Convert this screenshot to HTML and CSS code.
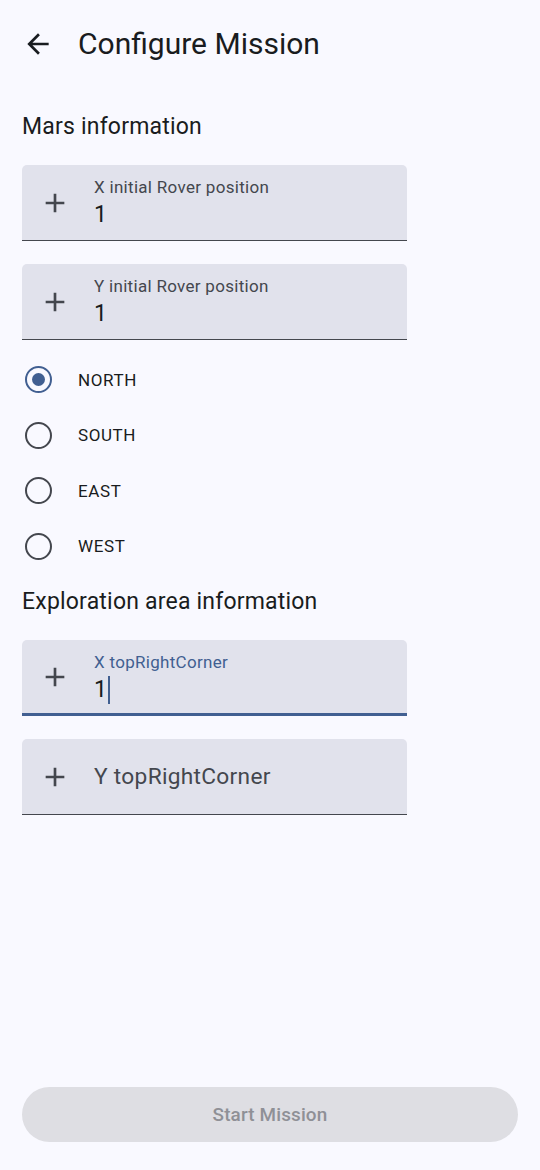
FILE: index.html
```html
<!DOCTYPE html>
<html lang="en">
<head>
<meta charset="utf-8">
<title>Configure Mission</title>
<link rel="stylesheet" href="styles.css">
</head>
<body>
<div class="screen">
  <header class="appbar">
    <span class="nav-icon">
      <svg viewBox="0 0 24 24" width="32" height="32"><path d="M20 11H7.83l5.59-5.59L12 4l-8 8 8 8 1.41-1.41L7.83 13H20v-2z" fill="#191c20"/></svg>
    </span>
    <h1 class="title">Configure Mission</h1>
  </header>

  <main class="content">
    <h2 class="section-title">Mars information</h2>

    <div class="field">
      <span class="lead"><svg viewBox="0 0 24 24" width="32" height="32"><path d="M19 13h-6v6h-2v-6H5v-2h6V5h2v6h6v2z" fill="#44474e"/></svg></span>
      <div class="field-text">
        <span class="label">X initial Rover position</span>
        <span class="value">1</span>
      </div>
    </div>

    <div class="field">
      <span class="lead"><svg viewBox="0 0 24 24" width="32" height="32"><path d="M19 13h-6v6h-2v-6H5v-2h6V5h2v6h6v2z" fill="#44474e"/></svg></span>
      <div class="field-text">
        <span class="label">Y initial Rover position</span>
        <span class="value">1</span>
      </div>
    </div>

    <div class="radios">
      <div class="radio-row"><span class="radio checked"></span><span class="radio-label">NORTH</span></div>
      <div class="radio-row"><span class="radio"></span><span class="radio-label">SOUTH</span></div>
      <div class="radio-row"><span class="radio"></span><span class="radio-label">EAST</span></div>
      <div class="radio-row"><span class="radio"></span><span class="radio-label">WEST</span></div>
    </div>

    <h2 class="section-title second">Exploration area information</h2>

    <div class="field focused">
      <span class="lead"><svg viewBox="0 0 24 24" width="32" height="32"><path d="M19 13h-6v6h-2v-6H5v-2h6V5h2v6h6v2z" fill="#44474e"/></svg></span>
      <div class="field-text">
        <span class="label">X topRightCorner</span>
        <span class="value">1<span class="cursor"></span></span>
      </div>
    </div>

    <div class="field empty">
      <span class="lead"><svg viewBox="0 0 24 24" width="32" height="32"><path d="M19 13h-6v6h-2v-6H5v-2h6V5h2v6h6v2z" fill="#44474e"/></svg></span>
      <div class="field-text">
        <span class="placeholder">Y topRightCorner</span>
      </div>
    </div>
  </main>

  <div class="footer">
    <button class="start-btn" disabled>Start Mission</button>
  </div>
</div>
</body>
</html>
```

FILE: styles.css
```css
* { box-sizing: border-box; }
html, body {
  margin: 0;
  padding: 0;
  background: #f9f9ff;
  font-family: Roboto, "Noto Sans", "Liberation Sans", sans-serif;
  color: #191c20;
}
.screen {
  min-height: 1170px;
  display: flex;
  flex-direction: column;
}
.appbar {
  height: 88px;
  display: flex;
  align-items: center;
  padding-left: 22px;
}
.nav-icon {
  width: 32px;
  height: 32px;
  display: flex;
}
.title {
  margin: 0 0 0 24px;
  font-size: 30px;
  font-weight: 400;
  line-height: 36px;
}
.content {
  padding: 0 22px;
  display: flex;
  flex-direction: column;
}
.section-title {
  margin: 25px 0 24px;
  font-size: 23px;
  font-weight: 400;
  line-height: 28px;
  letter-spacing: 0.2px;
}
.section-title.second {
  margin: 14px 0 24px;
}
.field {
  width: 385px;
  height: 76px;
  background: #e1e2ec;
  border-radius: 5px 5px 0 0;
  border-bottom: 1px solid #44474e;
  display: flex;
  align-items: center;
  margin-bottom: 23px;
}
.field.focused {
  border-bottom: 3px solid #415f91;
}
.lead {
  width: 32px;
  height: 32px;
  margin-left: 17px;
  display: flex;
}
.field-text {
  margin-left: 23px;
  display: flex;
  flex-direction: column;
  align-self: stretch;
  padding-top: 12px;
}
.label {
  font-size: 17px;
  line-height: 20px;
  color: #44474e;
  letter-spacing: 0.3px;
}
.focused .label { color: #415f91; }
.value {
  margin-top: 3px;
  font-size: 23px;
  line-height: 30px;
  color: #191c20;
  display: flex;
  align-items: center;
}
.cursor {
  display: inline-block;
  width: 2.5px;
  height: 28px;
  background: #415f91;
  margin-left: 1px;
}
.field.empty .field-text {
  padding-top: 0;
  justify-content: center;
}
.placeholder {
  font-size: 22.7px;
  line-height: 28px;
  color: #44474e;
  letter-spacing: 0.3px;
}
.radios {
  display: flex;
  flex-direction: column;
  margin-top: -11px;
}
.radio-row {
  height: 55.5px;
  display: flex;
  align-items: center;
}
.radio {
  width: 27px;
  height: 27px;
  border: 2.6px solid #44474e;
  border-radius: 50%;
  margin-left: 3px;
  display: flex;
  align-items: center;
  justify-content: center;
}
.radio.checked { border-color: #415f91; }
.radio.checked::after {
  content: "";
  width: 13px;
  height: 13px;
  border-radius: 50%;
  background: #415f91;
}
.radio-label {
  margin-left: 26px;
  font-size: 17px;
  letter-spacing: 0.6px;
  color: #191c20;
}
.footer {
  margin-top: auto;
  padding: 0 22px 28px;
}
.start-btn {
  width: 100%;
  height: 55px;
  border: none;
  border-radius: 28px;
  background: #dedee3;
  color: #8f9096;
  font-family: Roboto, "Noto Sans", "Liberation Sans", sans-serif;
  font-size: 18.9px;
  font-weight: 500;
  letter-spacing: 0.15px;
}
```
